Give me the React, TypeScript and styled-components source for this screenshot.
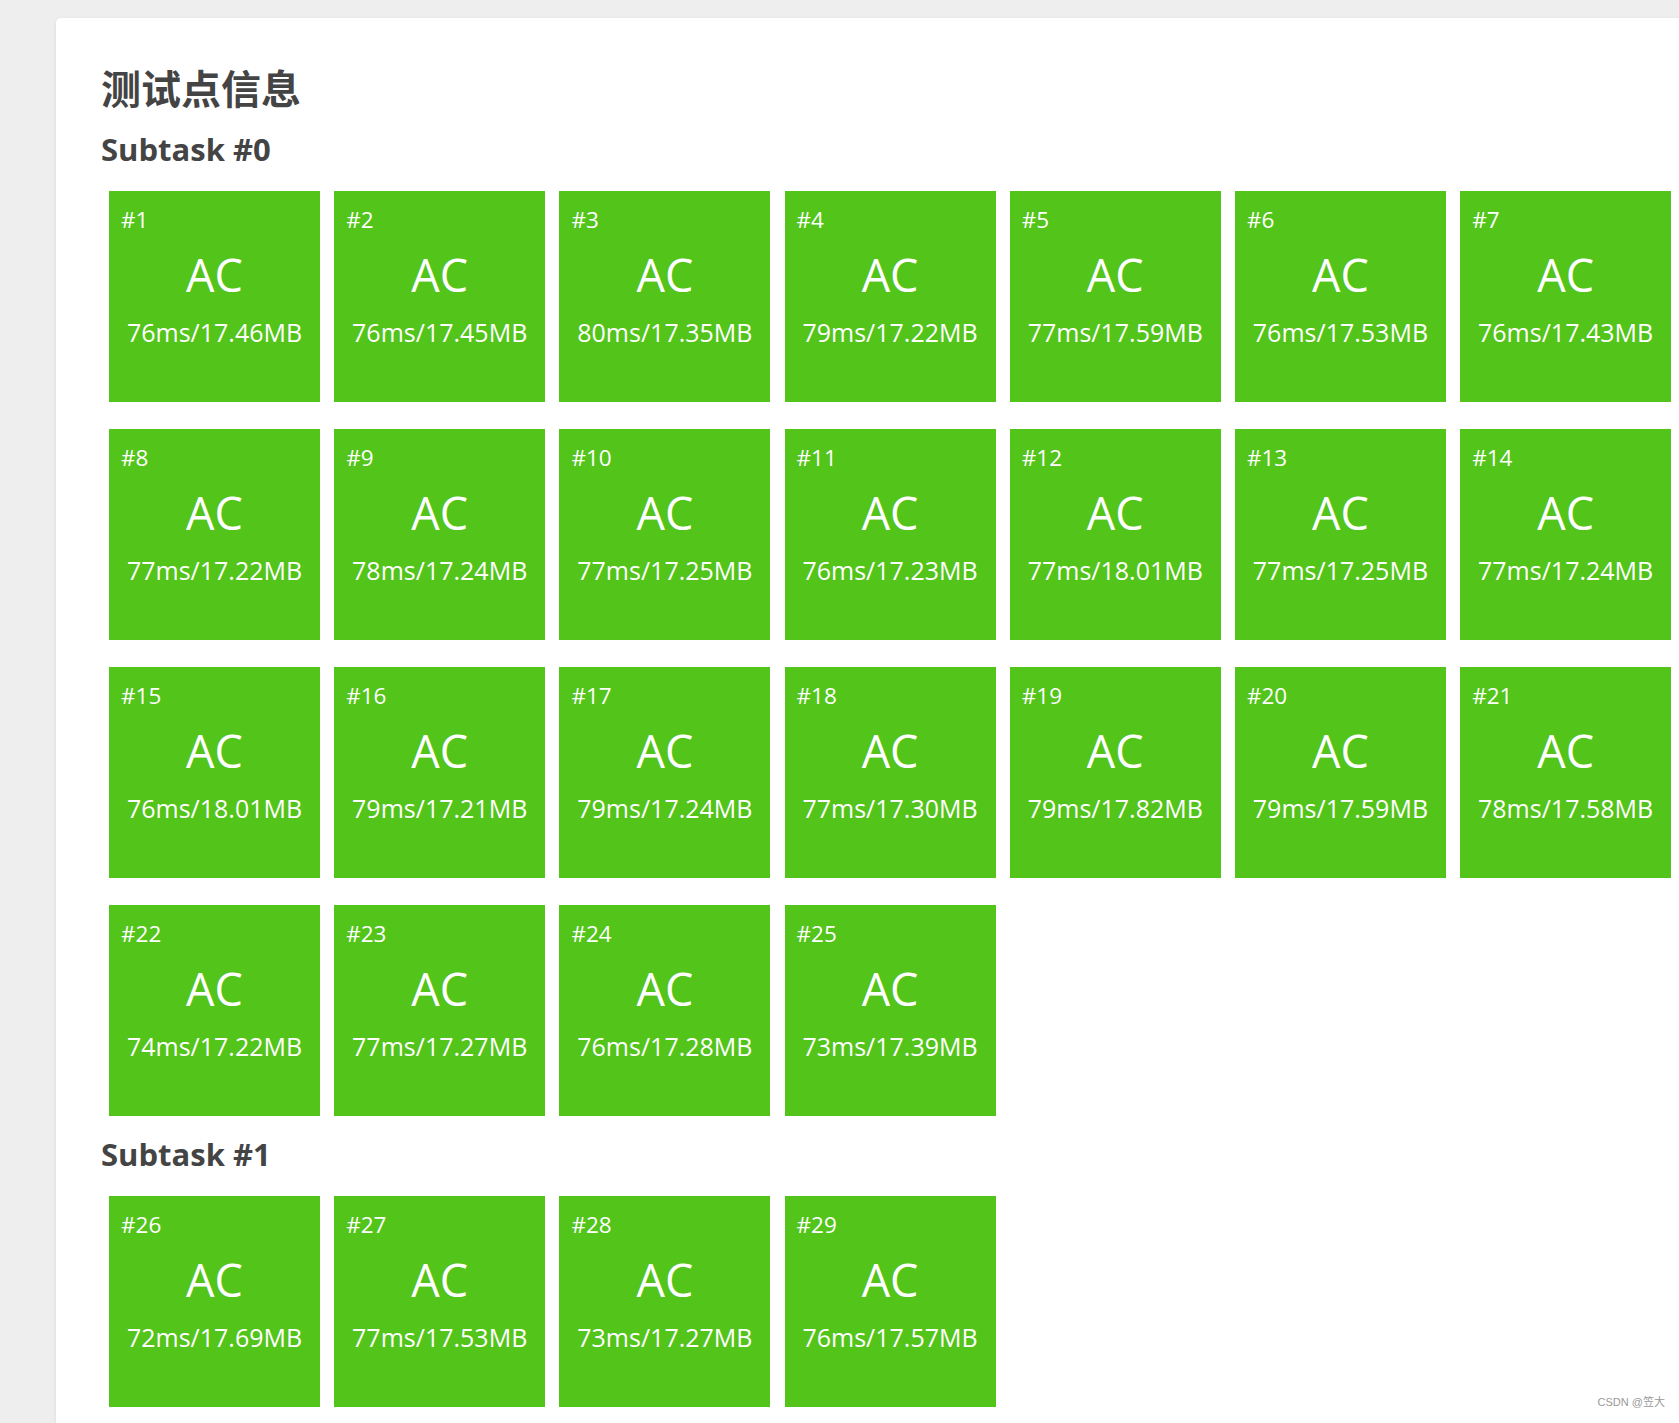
import React from 'react';
import styled, { createGlobalStyle } from 'styled-components';

interface Case {
  id: number;
  time: number;
  memory: string;
}

interface Subtask {
  name: string;
  cases: Case[];
}

const subtasks: Subtask[] = [
  {
    name: 'Subtask #0',
    cases: [
      { id: 1, time: 76, memory: '17.46' },
      { id: 2, time: 76, memory: '17.45' },
      { id: 3, time: 80, memory: '17.35' },
      { id: 4, time: 79, memory: '17.22' },
      { id: 5, time: 77, memory: '17.59' },
      { id: 6, time: 76, memory: '17.53' },
      { id: 7, time: 76, memory: '17.43' },
      { id: 8, time: 77, memory: '17.22' },
      { id: 9, time: 78, memory: '17.24' },
      { id: 10, time: 77, memory: '17.25' },
      { id: 11, time: 76, memory: '17.23' },
      { id: 12, time: 77, memory: '18.01' },
      { id: 13, time: 77, memory: '17.25' },
      { id: 14, time: 77, memory: '17.24' },
      { id: 15, time: 76, memory: '18.01' },
      { id: 16, time: 79, memory: '17.21' },
      { id: 17, time: 79, memory: '17.24' },
      { id: 18, time: 77, memory: '17.30' },
      { id: 19, time: 79, memory: '17.82' },
      { id: 20, time: 79, memory: '17.59' },
      { id: 21, time: 78, memory: '17.58' },
      { id: 22, time: 74, memory: '17.22' },
      { id: 23, time: 77, memory: '17.27' },
      { id: 24, time: 76, memory: '17.28' },
      { id: 25, time: 73, memory: '17.39' },
    ],
  },
  {
    name: 'Subtask #1',
    cases: [
      { id: 26, time: 72, memory: '17.69' },
      { id: 27, time: 77, memory: '17.53' },
      { id: 28, time: 73, memory: '17.27' },
      { id: 29, time: 76, memory: '17.57' },
    ],
  },
];

const GlobalStyle = createGlobalStyle`
  html, body {
    margin: 0;
    padding: 0;
    background: #eeeeee;
    overflow: hidden;
  }
  body {
    font-family: "Open Sans", "Noto Sans CJK SC", sans-serif;
    color: #444444;
  }
`;

const Page = styled.div`
  position: relative;
  height: 1423px;
  overflow: hidden;
  padding: 18px 0 0 56px;
  box-sizing: border-box;
`;

const Card = styled.section`
  width: 1700px;
  min-height: 1500px;
  background: #ffffff;
  border-radius: 5px;
  box-shadow: 0 1px 4px rgba(0, 0, 0, 0.08);
  padding: 44px 0 0 45px;
  box-sizing: border-box;
`;

const Title = styled.h2`
  margin: 0;
  font-family: "Noto Sans CJK SC", sans-serif;
  font-size: 40px;
  font-weight: 700;
  line-height: 50px;
  color: #444444;
`;

const SubtaskTitle = styled.h3<{ $first?: boolean }>`
  margin: ${({ $first }) => ($first ? '19px' : '20px')} 0 24px;
  font-size: 31px;
  font-weight: 700;
  line-height: 36px;
  color: #444444;
`;

const Grid = styled.div`
  display: grid;
  grid-template-columns: repeat(7, 211px);
  column-gap: 14.2px;
  row-gap: 27px;
  margin-left: 8px;
`;

const CaseBox = styled.div`
  width: 211px;
  height: 211px;
  background: #52c41a;
  color: #ffffff;
  display: flex;
  flex-direction: column;
  box-sizing: border-box;
  padding-top: 16px;
`;

const CaseId = styled.div`
  font-size: 22.5px;
  line-height: 26px;
  padding-left: 12px;
`;

const Status = styled.div`
  margin-top: 15px;
  font-size: 45px;
  line-height: 54px;
  text-align: center;
`;

const Usage = styled.div`
  margin-top: 15px;
  font-size: 25px;
  line-height: 31px;
  text-align: center;
`;

const Watermark = styled.div`
  position: absolute;
  right: 14px;
  bottom: 14px;
  font-family: "Liberation Sans", "Noto Sans CJK SC", sans-serif;
  font-size: 11px;
  color: #999999;
`;

export default function App() {
  return (
    <>
      <GlobalStyle />
      <Page>
        <Card>
          <Title>测试点信息</Title>
          {subtasks.map((sub, i) => (
            <div key={sub.name}>
              <SubtaskTitle $first={i === 0}>{sub.name}</SubtaskTitle>
              <Grid>
                {sub.cases.map((c) => (
                  <CaseBox key={c.id}>
                    <CaseId>#{c.id}</CaseId>
                    <Status>AC</Status>
                    <Usage>
                      {c.time}ms/{c.memory}MB
                    </Usage>
                  </CaseBox>
                ))}
              </Grid>
            </div>
          ))}
        </Card>
        <Watermark>CSDN @笠大</Watermark>
      </Page>
    </>
  );
}
